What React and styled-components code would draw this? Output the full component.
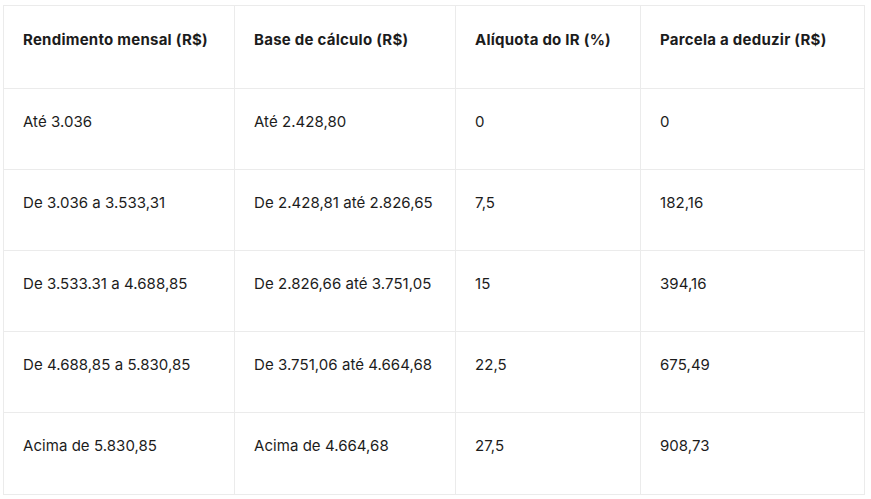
import React from 'react';
import styled, { createGlobalStyle } from 'styled-components';

const GlobalStyle = createGlobalStyle`
  body {
    margin: 0;
    background: #ffffff;
    font-family: Inter, "Liberation Sans", Arial, sans-serif;
    color: #1c1c1c;
  }
`;

const Page = styled.div`
  padding: 5px 0 0 3px;
`;

const Table = styled.table`
  border-collapse: collapse;
  table-layout: fixed;
  width: 861px;
  font-size: 15px;
  line-height: 18px;
`;

const HeadCell = styled.th`
  width: ${({ width }) => width}px;
  height: 83px;
  padding: 25px 0 0 19px;
  box-sizing: border-box;
  border: 1px solid #ebebeb;
  text-align: left;
  vertical-align: top;
  font-weight: 700;
  letter-spacing: 0.25px;
`;

const Cell = styled.td`
  height: ${({ last }) => (last ? 82 : 81)}px;
  padding: 24px 0 0 19px;
  box-sizing: border-box;
  border: 1px solid #ebebeb;
  vertical-align: top;
  font-weight: 400;
  letter-spacing: 0.05px;
`;

const columns = [
  { label: 'Rendimento mensal (R$)', width: 231 },
  { label: 'Base de cálculo (R$)', width: 221 },
  { label: 'Alíquota do IR (%)', width: 185 },
  { label: 'Parcela a deduzir (R$)', width: 224 },
];

const rows = [
  ['Até 3.036', 'Até 2.428,80', '0', '0'],
  ['De 3.036 a 3.533,31', 'De 2.428,81 até 2.826,65', '7,5', '182,16'],
  ['De 3.533.31 a 4.688,85', 'De 2.826,66 até 3.751,05', '15', '394,16'],
  ['De 4.688,85 a 5.830,85', 'De 3.751,06 até 4.664,68', '22,5', '675,49'],
  ['Acima de 5.830,85', 'Acima de 4.664,68', '27,5', '908,73'],
];

const App = () => {
  return (
    <Page>
      <GlobalStyle />
      <Table>
        <thead>
          <tr>
            {columns.map((col) => (
              <HeadCell key={col.label} width={col.width}>
                {col.label}
              </HeadCell>
            ))}
          </tr>
        </thead>
        <tbody>
          {rows.map((row, i) => (
            <tr key={i}>
              {row.map((value, j) => (
                <Cell key={j} last={i === rows.length - 1}>
                  {value}
                </Cell>
              ))}
            </tr>
          ))}
        </tbody>
      </Table>
    </Page>
  );
};

export default App;
